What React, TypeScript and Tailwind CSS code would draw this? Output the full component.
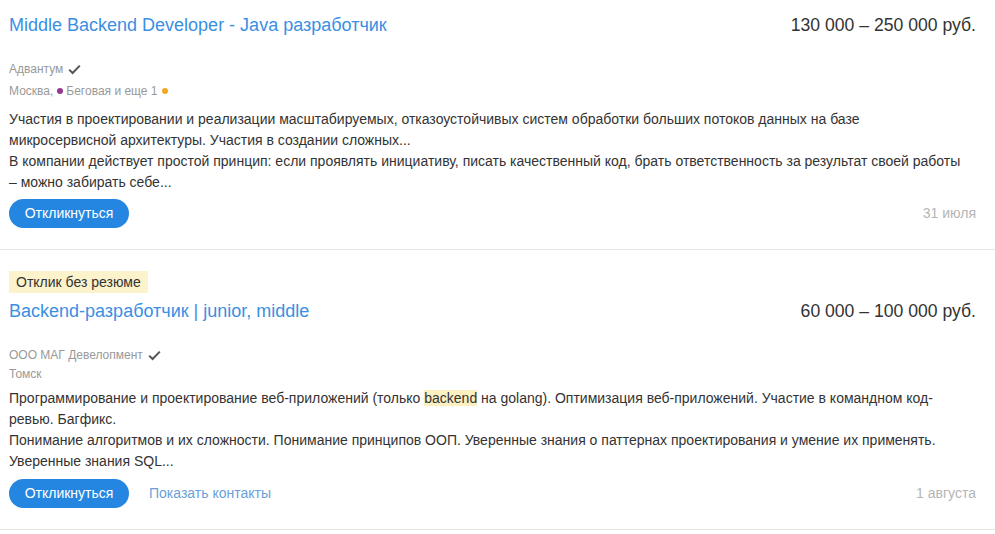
import React from "react";

const Check = () => (
  <svg width="13" height="11" viewBox="0 0 13 11" className="ml-[5px] inline-block">
    <path d="M1.2 5.6 L4.6 9 L11.8 1.6" fill="none" stroke="#555" strokeWidth="2" />
  </svg>
);

function Card({
  badge,
  title,
  salary,
  company,
  city,
  cityMt,
  bodyMt,
  btnMt,
  body,
  date,
  contacts,
  pt,
}: {
  badge?: boolean;
  title: string;
  salary: string;
  company: string;
  city: React.ReactNode;
  cityMt: string;
  bodyMt: string;
  btnMt: string;
  body: React.ReactNode;
  date: string;
  contacts?: boolean;
  pt: string;
}) {
  return (
    <div className={`border-b border-[#e6e6e6] pl-[9px] pr-[19px] pb-[21px] ${pt}`}>
      {badge && (
        <div className="mb-[6px] block h-[22px] w-fit bg-[#fcf2cb] px-[7px] text-[14px] leading-[22px] text-[#333]">
          Отклик без резюме
        </div>
      )}
      <div className="flex items-start justify-between">
        <div className="text-[18px] leading-[24px] text-[#3a8fe3]">{title}</div>
        <div className="text-[17.6px] leading-[24px] text-[#333]">{salary}</div>
      </div>
      <div className="mt-[23px] flex items-center text-[12px] leading-[18px] text-[#999]">
        {company}
        <Check />
      </div>
      <div className={`${cityMt} flex items-center text-[12px] leading-[18px] text-[#999]`}>{city}</div>
      <div className={`${bodyMt} w-[966px] text-[14px] leading-[21px] text-[#333]`}>{body}</div>
      <div className={`${btnMt} flex items-center justify-between`}>
        <div className="flex items-center">
          <button className="h-[29px] w-[120px] rounded-full bg-[#2486e0] text-[14px] text-white">
            Откликнуться
          </button>
          {contacts && (
            <span className="ml-[20px] text-[14px] text-[#6b9fd8]">Показать контакты</span>
          )}
        </div>
        <div className="text-[14px] text-[#b5b5b5]">{date}</div>
      </div>
    </div>
  );
}

export default function App() {
  return (
    <div
      className="w-[995px] min-h-[534px] bg-white"
      style={{ fontFamily: '"Liberation Sans", Arial, sans-serif' }}
    >
      <Card
        pt="pt-[13px]"
        title="Middle Backend Developer - Java разработчик"
        salary="130 000 – 250 000 руб."
        company="Адвантум"
        cityMt="mt-[4px]"
        bodyMt="mt-[9px]"
        btnMt="mt-[6px]"
        city={
          <>
            Москва,
            <span className="ml-[4px] mr-[3px] inline-block h-[6px] w-[6px] rounded-full bg-[#94398f]" />
            Беговая и еще 1
            <span className="ml-[4px] inline-block h-[6px] w-[6px] rounded-full bg-[#f5a623]" />
          </>
        }
        body={
          <>
            Участия в проектировании и реализации масштабируемых, отказоустойчивых систем обработки больших потоков данных на базе
            <br />
            микросервисной архитектуры. Участия в создании сложных...
            <br />
            В компании действует простой принцип: если проявлять инициативу, писать качественный код, брать ответственность за результат своей работы
            <br />– можно забирать себе...
          </>
        }
        date="31 июля"
      />
      <Card
        pt="pt-[21px]"
        badge
        title="Backend-разработчик | junior, middle"
        salary="60 000 – 100 000 руб."
        company="ООО МАГ Девелопмент"
        cityMt="mt-[1px]"
        bodyMt="mt-[5px]"
        btnMt="mt-[7px]"
        city={<>Томск</>}
        body={
          <>
            Программирование и проектирование веб-приложений (только{" "}
            <span className="bg-[#fcefc0]">backend</span> на golang). Оптимизация веб-приложений. Участие в командном код-
            <br />
            ревью. Багфикс.
            <br />
            Понимание алгоритмов и их сложности. Понимание принципов ООП. Уверенные знания о паттернах проектирования и умение их применять.
            <br />
            Уверенные знания SQL...
          </>
        }
        date="1 августа"
        contacts
      />
    </div>
  );
}
